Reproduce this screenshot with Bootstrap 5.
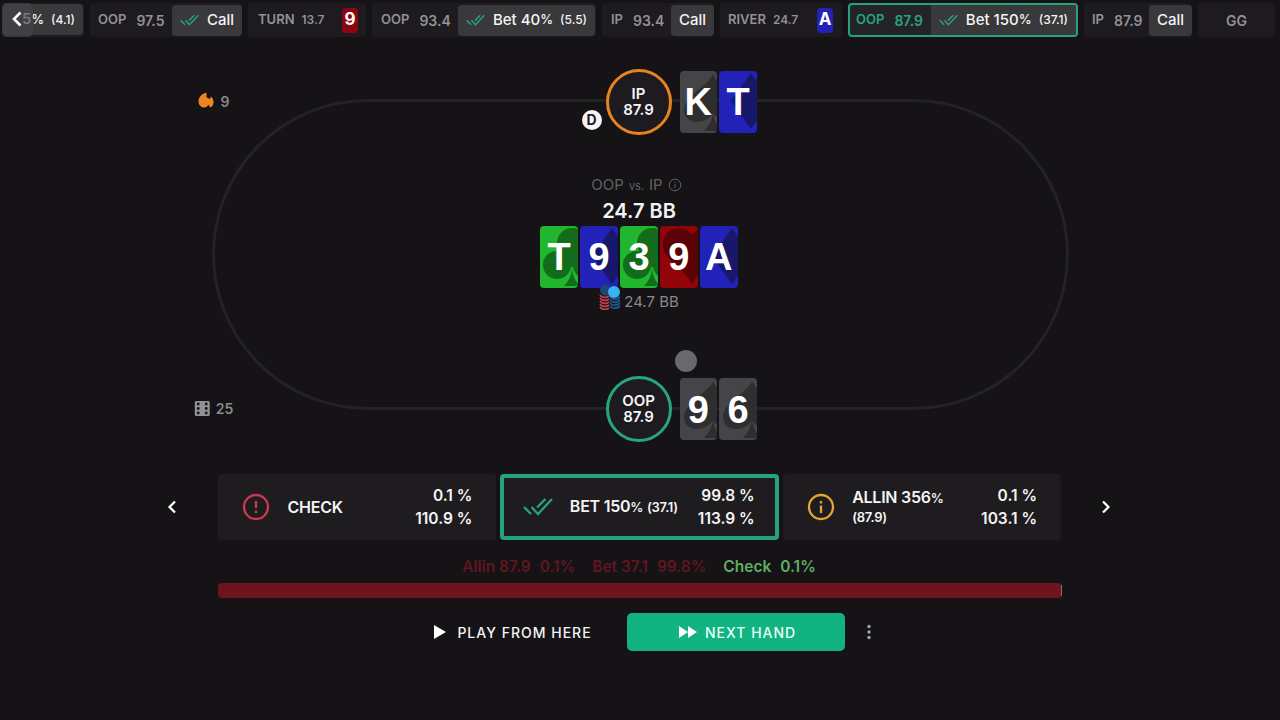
<!DOCTYPE html>
<html lang="en">
<head>
    <meta charset="UTF-8">
    <meta name="viewport" content="width=device-width, initial-scale=1">
    <title>Poker Trainer</title>
    <link href="https://cdn.jsdelivr.net/npm/bootstrap@5.3.0/dist/css/bootstrap.min.css" rel="stylesheet">
    <style>
        body {
            background: #151316;
            color: #f4f4f5;
            font-family: Inter, "Liberation Sans", sans-serif;
            height: 720px;
            overflow: hidden;
        }
        svg { display: block; flex: none; }

        /* History bar */
        .history { height: 40px; padding: 3px 0 0 2px; gap: 6px; }
        .step {
            flex: none;
            height: 34px;
            background: #1d1b1f;
            border-radius: 4px;
            color: #929195;
            font-size: 13px;
            font-weight: 600;
            white-space: nowrap;
            padding: 1px;
        }
        .step .stack { margin-left: 10px; font-size: 14px; }
        .step .pot { font-size: 12px; margin-left: 7px; }
        .move {
            height: 31px;
            background: #39383b;
            border-radius: 4px;
            color: #f4f4f5;
            font-size: 15px;
            font-weight: 500;
            padding: 0 8px 0 7.5px;
        }
        .move .pct { font-size: 13px; }
        .move .amt { font-size: 12px; margin-left: 7px; }
        .step-first { width: 82px; }
        .step-call { width: 152px; padding: 0 0 0 8px; }
        .step-turn { width: 118px; padding: 0 8px 0 10px; }
        .step-bet { width: 224px; padding-left: 9px; }
        .step-ip { width: 112px; padding: 0 0 0 9px; }
        .step-river { width: 122px; padding: 0 9px 0 8px; }
        .step-active { width: 230px; padding: 0 0 0 6px; border: 2px solid #27a37b; color: #27a37b; background: #242327; }
        .step-active .move { height: 30px; border-radius: 2px; }
        .step-ip2 { width: 108px; padding: 0 0 0 8px; }
        .step-end { width: 77px; font-size: 14px; }
        .mini {
            width: 16px;
            height: 25px;
            border-radius: 4px;
            color: #fff;
            font-size: 17px;
            font-weight: 700;
        }
        .mini-red { background: #8c0610; }
        .mini-blue { background: #2222b4; }
        .back {
            left: 2px;
            top: 3px;
            width: 31px;
            height: 34px;
            border-radius: 5px;
            background: rgba(70, 69, 72, .7);
        }

        /* Table */
        .stage { height: 433.5px; padding-top: 59px; }
        .oval {
            width: 857px;
            height: 311px;
            border: 3px solid #242225;
            border-radius: 156px;
        }
        .seat { display: grid; grid-template-columns: 1fr 66px 1fr; column-gap: 8px; align-items: center; margin-left: -3px; }
        .seat-top { margin-top: -33.5px; }
        .seat-bottom { margin-bottom: -35px; }
        .player {
            grid-column: 2;
            width: 66px;
            height: 66px;
            border: 3px solid #27a67d;
            border-radius: 50%;
            background: #1d1b1f;
            font-size: 15px;
            font-weight: 600;
            line-height: 16px;
        }
        .player-ip { border-color: #e8841f; }
        .dealer {
            left: -27px;
            top: 38px;
            width: 20px;
            height: 20px;
            border-radius: 50%;
            background: #f4f4f5;
            color: #1d1b1f;
            font-size: 14px;
            font-weight: 700;
        }
        .marker { left: 66px; top: -29.5px; width: 22px; height: 22px; border-radius: 50%; background: #69686b; }
        .tile {
            position: relative;
            width: 37.6px;
            height: 62px;
            border-radius: 4px;
            overflow: hidden;
            color: #fff;
            font-size: 38px;
            font-weight: 700;
            font-family: "Liberation Sans", sans-serif;
        }
        .tile svg { position: absolute; left: 0; top: 0; }
        .tile span { position: relative; top: 1px; }
        .tiles { gap: 2.3px; }
        .suit-s { background: #454447; fill: #2e2d30; }
        .suit-d { background: #2222b8; fill: #17176c; }
        .suit-c { background: #20b62e; fill: #126c1b; }
        .suit-h { background: #930408; fill: #5a0205; }
        .board { margin: 0 0 27px -2px; }
        .matchup { color: #626164; font-size: 15px; line-height: 20px; gap: 5px; margin-left: -5px; }
        .matchup .vs { font-size: 11px; padding-top: 3px; }
        .total { font-size: 20px; font-weight: 600; line-height: 26px; margin: 2px 0 1.5px; }
        .pot-line { color: #89888b; font-size: 15px; gap: 3px; line-height: 20px; height: 26px; margin: -3.5px 0 0 0; position: relative; }
        .pot-line span { margin-bottom: -2px; }
        .side-stat { color: #89888b; font-size: 14px; font-weight: 600; transform: translate(-50%, -50%); }
        .stat-streak { left: -1px; top: -1.500px; gap: 7px; }
        .stat-dice { left: -1px; top: 306px; gap: 6px; }

        /* Decision row */
        .choices { width: 843px; gap: 4px; }
        .choice {
            flex: 1 1 0;
            height: 66px;
            border-radius: 4px;
            background: #1e1c1f;
            padding: 0 24px 0 22px;
            font-size: 16px;
            font-weight: 600;
        }
        .choice-active { box-shadow: inset 0 0 0 4px #27a37b; }
        .choice .icon-slot { width: 32px; margin-right: 15.5px; }
        .choice .label-text { line-height: 18px; letter-spacing: -.25px; }
        .choice .pct { font-size: 13px; }
        .choice .amt { font-size: 13px; }
        .choice .scores { line-height: 23px; font-size: 15.5px; padding-top: 1px; }
        .arrow { width: 24px; margin: 0 34px; }
        .arrow-next { margin-right: 35px; }
        .legend { font-size: 15.5px; font-weight: 600; line-height: 20px; margin: 17px 2px 0 0; gap: 17px; }
        .legend .freq { margin-left: 9px; }
        .raise { color: #601620; }
        .passive { color: #5fae60; }
        .strategy { width: 844px; height: 15px; border-radius: 4px; margin-top: 6px; background: #6d141f; }
        .strategy .rest { width: 1px; background: #777; margin: 2px 0; }
        .actions { margin: 15.5px 0 0 26px; font-size: 14px; font-weight: 500; letter-spacing: 1px; }
        .btn-plain { gap: 11px; margin-right: 35px; color: #f4f4f5; }
        .btn-next { width: 218px; height: 38px; background: #11b381; border-radius: 5px; gap: 8px; padding-left: 4px; color: #e9fff7; }
        .more { margin-left: 21px; }
    </style>
</head>
<body>
    <svg width="0" height="0" class="position-absolute">
        <symbol id="s" viewBox="0 0 38 62">
            <path d="M33 3C29 14 4 25 4 39c0 8 6 12 13 12 7 0 13-4 16-9 3 5 9 9 16 9V20C42 14 35 9 33 3z"/>
            <path d="M33 42c-1 7-4 13-9 18h18c-5-5-8-11-9-18z"/>
        </symbol>
        <symbol id="d" viewBox="0 0 38 62"><path d="M32 2L12 30l20 28 20-28z"/></symbol>
        <symbol id="c" viewBox="0 0 38 62">
            <circle cx="32" cy="17" r="15"/><circle cx="17" cy="39" r="14"/><circle cx="47" cy="39" r="14"/>
            <path d="M24 26h14v15H24zM32 40c0 9-3 15-8 20h16c-5-5-8-11-8-20z"/>
        </symbol>
        <symbol id="h" viewBox="0 0 38 62"><path d="M32 9C25-2 3 0 3 19c0 15 20 21 29 39 9-18 29-24 29-39C61 0 39-2 32 9z"/></symbol>
        <symbol id="checks" viewBox="0 0 30 19">
            <path d="M1 10l7 7M14 10.500L22.500 2M8.500 10l6.500 7L29 2" fill="none" stroke="#27a37b" stroke-width="2.300"/>
        </symbol>
    </svg>

    <!-- Hand history -->
    <div class="history d-flex position-relative">
        <div class="step step-first"><div class="move d-flex align-items-center justify-content-end">5<span class="pct">%</span><span class="amt">(4.1)</span></div></div>
        <div class="step step-call d-flex align-items-center">
            <span>OOP</span><span class="stack">97.5</span>
            <div class="move d-flex align-items-center ms-auto"><svg width="19" height="12" class="me-2"><use href="#checks"/></svg>Call</div>
        </div>
        <div class="step step-turn d-flex align-items-center">
            <span>TURN</span><span class="pot">13.7</span>
            <div class="mini mini-red d-flex align-items-center justify-content-center ms-auto">9</div>
        </div>
        <div class="step step-bet d-flex align-items-center">
            <span>OOP</span><span class="stack">93.4</span>
            <div class="move d-flex align-items-center ms-auto"><svg width="19" height="12" class="me-2"><use href="#checks"/></svg>Bet 40<span class="pct">%</span><span class="amt">(5.5)</span></div>
        </div>
        <div class="step step-ip d-flex align-items-center">
            <span>IP</span><span class="stack">93.4</span>
            <div class="move d-flex align-items-center ms-auto">Call</div>
        </div>
        <div class="step step-river d-flex align-items-center">
            <span>RIVER</span><span class="pot">24.7</span>
            <div class="mini mini-blue d-flex align-items-center justify-content-center ms-auto">A</div>
        </div>
        <div class="step step-active d-flex align-items-center">
            <span>OOP</span><span class="stack">87.9</span>
            <div class="move d-flex align-items-center ms-auto"><svg width="19" height="12" class="me-2"><use href="#checks"/></svg>Bet 150<span class="pct">%</span><span class="amt">(37.1)</span></div>
        </div>
        <div class="step step-ip2 d-flex align-items-center">
            <span>IP</span><span class="stack">87.9</span>
            <div class="move d-flex align-items-center ms-auto">Call</div>
        </div>
        <div class="step step-end d-flex align-items-center justify-content-center">GG</div>
        <div class="back position-absolute">
            <svg width="31" height="32"><path d="M18.500 9.500L12 16l6.500 6.500" fill="none" stroke="#fff" stroke-width="2.600"/></svg>
        </div>
    </div>

    <!-- Table -->
    <div class="stage d-flex justify-content-center">
        <div class="oval position-relative d-flex flex-column justify-content-between">
            <div class="seat seat-top">
                <div class="player player-ip position-relative d-flex align-items-center justify-content-center text-center">
                    <div>IP<br>87.9</div>
                    <div class="dealer position-absolute d-flex align-items-center justify-content-center">D</div>
                </div>
                <div class="tiles d-flex">
                    <div class="tile suit-s d-flex align-items-center justify-content-center"><svg width="38" height="62"><use href="#s"/></svg><span>K</span></div>
                    <div class="tile suit-d d-flex align-items-center justify-content-center"><svg width="38" height="62"><use href="#d"/></svg><span>T</span></div>
                </div>
            </div>
            <div class="board d-flex flex-column align-items-center">
                <div class="matchup d-flex align-items-center">
                    <span>OOP</span><span class="vs">vs.</span><span>IP</span>
                    <svg width="14" height="14" viewBox="0 0 14 14" fill="none" stroke="#626164"><circle cx="7" cy="7" r="5.800"/><path d="M7 6v4M7 3.700v1.200"/></svg>
                </div>
                <div class="total">24.7 BB</div>
                <div class="tiles d-flex">
                    <div class="tile suit-c d-flex align-items-center justify-content-center"><svg width="38" height="62"><use href="#c"/></svg><span>T</span></div>
                    <div class="tile suit-d d-flex align-items-center justify-content-center"><svg width="38" height="62"><use href="#d"/></svg><span>9</span></div>
                    <div class="tile suit-c d-flex align-items-center justify-content-center"><svg width="38" height="62"><use href="#c"/></svg><span>3</span></div>
                    <div class="tile suit-h d-flex align-items-center justify-content-center"><svg width="38" height="62"><use href="#h"/></svg><span>9</span></div>
                    <div class="tile suit-d d-flex align-items-center justify-content-center"><svg width="38" height="62"><use href="#d"/></svg><span>A</span></div>
                </div>
                <div class="pot-line d-flex align-items-end">
                    <svg width="22" height="26" viewBox="0 0 22 26">
                        <circle cx="6.500" cy="6" r="5.500" fill="#1c4777"/>
                        <g fill="none" stroke-width="1.800">
                            <path d="M1 11c2 3 6 3 9 1M1 14c2 3 6 3 9 1M1 17c2 3 6 3 9 1M1 20c2 3 6 3 9 1M1 23c2 3 6 3 9 1" stroke="#c6414e"/>
                            <path d="M11 13c2 3 7 3 10 0M11 16c2 3 7 3 10 0M11 19c2 3 7 3 10 0M11 22c2 3 7 3 10 0" stroke="#1d588a"/>
                        </g>
                        <circle cx="15" cy="8" r="6" fill="#38b2f0"/>
                    </svg>
                    <span>24.7 BB</span>
                </div>
            </div>
            <div class="seat seat-bottom">
                <div class="player position-relative d-flex align-items-center justify-content-center text-center">
                    <div>OOP<br>87.9</div>
                    <div class="marker position-absolute"></div>
                </div>
                <div class="tiles d-flex">
                    <div class="tile suit-s d-flex align-items-center justify-content-center"><svg width="38" height="62"><use href="#s"/></svg><span>9</span></div>
                    <div class="tile suit-s d-flex align-items-center justify-content-center"><svg width="38" height="62"><use href="#s"/></svg><span>6</span></div>
                </div>
            </div>
            <div class="side-stat stat-streak position-absolute d-flex align-items-center">
                <svg width="16" height="16" viewBox="0 0 16 16" fill="#ee8420"><path d="M8.500 0C4 1 .5 4.500.5 9c0 3.500 2.500 6 5.500 6 2.200 0 3.500-1 4.500-3 .6 1.500 1.200 2.500 2 3 2-1.200 3-3 3-5.200 0-2.500-1-4.300-2.500-5.800l-1.200 2.500L8.500 4.800z"/></svg>
                <span>9</span>
            </div>
            <div class="side-stat stat-dice position-absolute d-flex align-items-center">
                <svg width="16" height="16" viewBox="0 0 16 16"><rect x=".5" y=".5" width="15" height="15" rx="1.500" fill="#929195"/><g fill="#151316"><circle cx="4" cy="3.500" r="1.400"/><circle cx="4" cy="8" r="1.400"/><circle cx="4" cy="12.500" r="1.400"/><circle cx="12" cy="3.500" r="1.400"/><circle cx="12" cy="8" r="1.400"/><circle cx="12" cy="12.500" r="1.400"/></g></svg>
                <span>25</span>
            </div>
        </div>
    </div>

    <!-- Decisions -->
    <div class="d-flex justify-content-center align-items-center">
        <div class="arrow"><svg width="24" height="24"><path d="M15 6.500L9.500 12l5.500 5.500" fill="none" stroke="#fff" stroke-width="2.200"/></svg></div>
        <div class="choices d-flex">
            <div class="choice d-flex align-items-center">
                <div class="icon-slot d-flex justify-content-center"><svg width="28" height="28" fill="none" stroke="#cb3a4b" stroke-width="2.300"><circle cx="14" cy="14" r="12"/><path d="M14 8v7M14 17.500v2.500"/></svg></div>
                <div class="label-text">CHECK</div>
                <div class="scores text-end ms-auto">0.1 %<br>110.9 %</div>
            </div>
            <div class="choice choice-active d-flex align-items-center">
                <div class="icon-slot d-flex justify-content-center"><svg width="30" height="19"><use href="#checks"/></svg></div>
                <div class="label-text">BET 150<span class="pct">%</span> <span class="amt">(37.1)</span></div>
                <div class="scores text-end ms-auto">99.8 %<br>113.9 %</div>
            </div>
            <div class="choice d-flex align-items-center">
                <div class="icon-slot d-flex justify-content-center"><svg width="28" height="28" fill="none" stroke="#e5a52f" stroke-width="2.300"><circle cx="14" cy="14" r="12"/><path d="M14 12.500v7.500M14 8v2.500"/></svg></div>
                <div class="label-text">ALLIN 356<span class="pct">%</span><br><span class="amt">(87.9)</span></div>
                <div class="scores text-end ms-auto">0.1 %<br>103.1 %</div>
            </div>
        </div>
        <div class="arrow arrow-next"><svg width="24" height="24"><path d="M8 6.500l5.500 5.500L8 17.500" fill="none" stroke="#fff" stroke-width="2.200"/></svg></div>
    </div>

    <div class="legend d-flex justify-content-center">
        <div class="raise">Allin 87.9<span class="freq">0.1%</span></div>
        <div class="raise">Bet 37.1<span class="freq">99.8%</span></div>
        <div class="passive">Check<span class="freq">0.1%</span></div>
    </div>
    <div class="strategy d-flex justify-content-end mx-auto"><div class="rest"></div></div>

    <div class="actions d-flex justify-content-center align-items-center">
        <div class="btn-plain d-flex align-items-center" role="button">
            <svg width="12" height="14"><path d="M0 0l12 7-12 7z" fill="#fff"/></svg>PLAY FROM HERE
        </div>
        <div class="btn-next d-flex align-items-center justify-content-center" role="button">
            <svg width="18" height="12"><path d="M0 0l9 6-9 6zM9 0l9 6-9 6z" fill="#fff"/></svg>NEXT HAND
        </div>
        <svg width="6" height="16" fill="#a5a4a7" class="more"><circle cx="3" cy="2.500" r="1.700"/><circle cx="3" cy="8" r="1.700"/><circle cx="3" cy="13.500" r="1.700"/></svg>
    </div>

    <script src="https://cdn.jsdelivr.net/npm/bootstrap@5.3.0/dist/js/bootstrap.bundle.min.js"></script>
</body>
</html>
